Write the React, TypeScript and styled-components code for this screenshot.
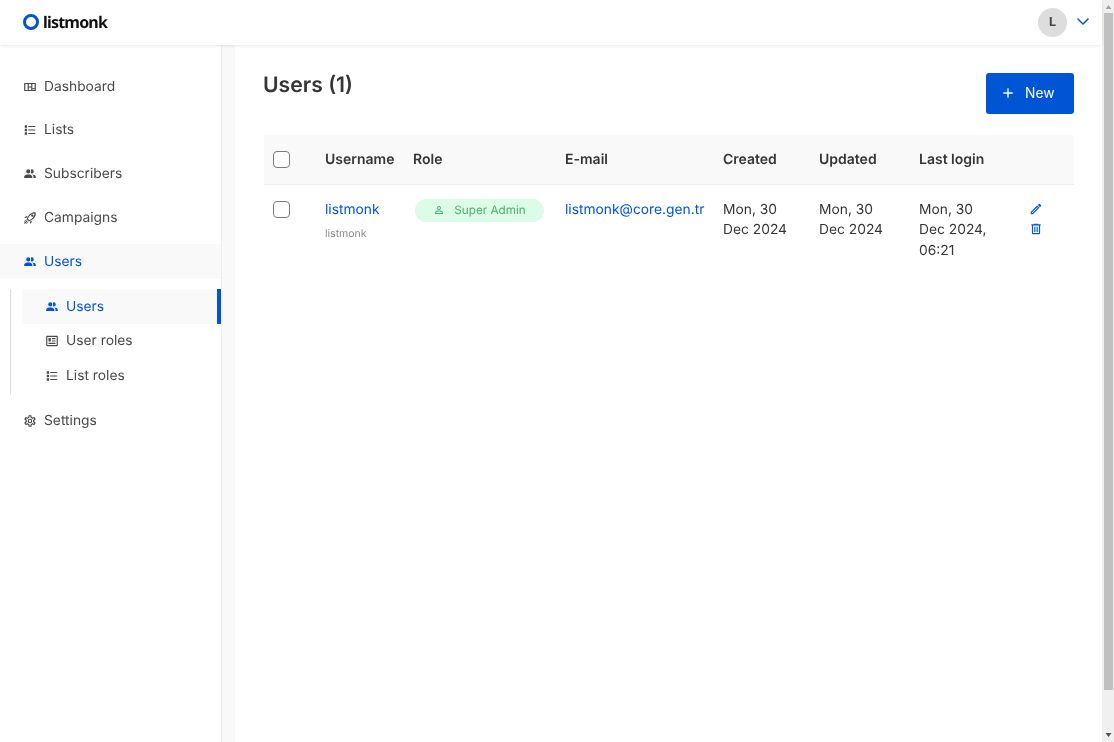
import React from "react";
import styled, { createGlobalStyle } from "styled-components";

const GlobalStyle = createGlobalStyle`
  body {
    margin: 0;
    font-family: Inter, "Liberation Sans", sans-serif;
    font-size: 13.8px;
    color: #4a4a4a;
    background: #fff;
    text-rendering: geometricPrecision;
  }
`;

const icons = {
  dashboard: "M2 5V19H22V5H2M4 7H8V17H4V7M10 7H14V11H10V7M16 7H20V14H16V7M10 13H14V17H10V13M16 16H20V17H16V16Z",
  list: "M3,4H7V8H3V4M9,5V7H21V5H9M3,10H7V14H3V10M9,11V13H21V11H9M3,16H7V20H3V16M9,17V19H21V17H9",
  people: "M16 17V19H2V17S2 13 9 13 16 17 16 17M12.5 7.5A3.5 3.5 0 1 0 9 11A3.5 3.5 0 0 0 12.5 7.5M15.94 13A5.32 5.32 0 0 1 18 17V19H22V17S22 13.37 15.94 13M15 4A3.39 3.39 0 0 0 13.07 4.59A5 5 0 0 1 13.07 10.41A3.39 3.39 0 0 0 15 11A3.5 3.5 0 0 0 15 4Z",
  rocket: "M13.13 22.19L11.5 18.36C13.07 17.78 14.54 17 15.9 16.09L13.13 22.19M5.64 12.5L1.81 10.87L7.91 8.1C7 9.46 6.22 10.93 5.64 12.5M21.61 2.39C21.61 2.39 16.66 .269 11 5.93C8.81 8.12 7.5 10.53 6.65 12.64C6.37 13.39 6.56 14.21 7.11 14.77L9.24 16.89C9.79 17.45 10.61 17.63 11.36 17.35C13.5 16.53 15.88 15.19 18.07 13C23.73 7.34 21.61 2.39 21.61 2.39M19.6 4.4C19.6 4.4 16.5 4 12.4 7.3C10.4 9 9.1 11.2 8.4 13.3L10.7 15.6C12.8 14.9 15 13.6 16.7 11.6C20 7.5 19.6 4.4 19.6 4.4M14.54 9.46C13.76 8.68 13.76 7.41 14.54 6.63S16.59 5.85 17.37 6.63C18.14 7.41 18.15 8.68 17.37 9.46C16.59 10.24 15.32 10.24 14.54 9.46M6.24 22L9.88 18.36C9.54 18.27 9.21 18.12 8.91 17.91L4.83 22H6.24M2 22H3.41L8.18 17.24L6.76 15.83L2 20.59V22M2 19.17L6.09 15.09C5.88 14.79 5.73 14.47 5.64 14.12L2 17.76V19.17Z",
  cog: "M12,8A4,4 0 0,1 16,12A4,4 0 0,1 12,16A4,4 0 0,1 8,12A4,4 0 0,1 12,8M12,10A2,2 0 0,0 10,12A2,2 0 0,0 12,14A2,2 0 0,0 14,12A2,2 0 0,0 12,10M10,22C9.75,22 9.54,21.82 9.5,21.58L9.13,18.93C8.5,18.68 7.96,18.34 7.44,17.94L4.95,18.95C4.73,19.03 4.46,18.95 4.34,18.73L2.34,15.27C2.21,15.05 2.27,14.78 2.46,14.63L4.57,12.97L4.5,12L4.57,11L2.46,9.37C2.27,9.22 2.21,8.95 2.34,8.73L4.34,5.27C4.46,5.05 4.73,4.96 4.95,5.05L7.44,6.05C7.96,5.66 8.5,5.32 9.13,5.07L9.5,2.42C9.54,2.18 9.75,2 10,2H14C14.25,2 14.46,2.18 14.5,2.42L14.87,5.07C15.5,5.32 16.04,5.66 16.56,6.05L19.05,5.05C19.27,4.96 19.54,5.05 19.66,5.27L21.66,8.73C21.79,8.95 21.73,9.22 21.54,9.37L19.43,11L19.5,12L19.43,13L21.54,14.63C21.73,14.78 21.79,15.05 21.66,15.27L19.66,18.73C19.54,18.95 19.27,19.04 19.05,18.95L16.56,17.95C16.04,18.34 15.5,18.68 14.87,18.93L14.5,21.58C14.46,21.82 14.25,22 14,22H10M11.25,4L10.88,6.61C9.68,6.86 8.62,7.5 7.85,8.39L5.44,7.35L4.69,8.65L6.8,10.2C6.4,11.37 6.4,12.64 6.8,13.8L4.68,15.36L5.43,16.66L7.86,15.62C8.63,16.5 9.68,17.14 10.87,17.38L11.24,20H12.76L13.13,17.39C14.32,17.14 15.37,16.5 16.14,15.62L18.57,16.66L19.32,15.36L17.2,13.81C17.6,12.64 17.6,11.37 17.2,10.2L19.31,8.65L18.56,7.35L16.15,8.39C15.38,7.5 14.32,6.86 13.12,6.62L12.75,4H11.25Z",
  newspaper: "M20 5L20 19L4 19L4 5H20M20 3H4C2.89 3 2 3.89 2 5V19C2 20.11 2.89 21 4 21H20C21.11 21 22 20.11 22 19V5C22 3.89 21.11 3 20 3M18 15H6V17H18V15M10 7H6V13H10V7M12 9H18V7H12V9M18 11H12V13H18V11Z",
  account: "M12,4A4,4 0 0,1 16,8A4,4 0 0,1 12,12A4,4 0 0,1 8,8A4,4 0 0,1 12,4M12,6A2,2 0 0,0 10,8A2,2 0 0,0 12,10A2,2 0 0,0 14,8A2,2 0 0,0 12,6M12,13C14.67,13 20,14.33 20,17V20H4V17C4,14.33 9.33,13 12,13M12,14.9C9.03,14.9 5.9,16.36 5.9,17V18.1H18.1V17C18.1,16.36 14.97,14.9 12,14.9Z",
  pencil: "M14.06,9L15,9.94L5.92,19H5V18.08L14.06,9M17.66,3C17.41,3 17.15,3.1 16.96,3.29L15.13,5.12L18.88,8.87L20.71,7.04C21.1,6.65 21.1,6 20.71,5.63L18.37,3.29C18.17,3.09 17.92,3 17.66,3M14.06,6.19L3,17.25V21H6.75L17.81,9.94L14.06,6.19Z",
  trash: "M9,3V4H4V6H5V19A2,2 0 0,0 7,21H17A2,2 0 0,0 19,19V6H20V4H15V3H9M7,6H17V19H7V6M9,8V17H11V8H9M13,8V17H15V8H13Z",
  chevron: "M7 9L12 14L17 9L18 10L12 16L6 10Z",
  plus: "M19,13H13V19H11V13H5V11H11V5H13V11H19V13Z",
};

type IconName = keyof typeof icons;

const Svg = styled.svg<{ $size: number }>`
  display: block;
  flex: none;
  width: ${(p) => p.$size}px;
  height: ${(p) => p.$size}px;
  fill: currentColor;
  fill-rule: evenodd;
`;

function Icon({ name, size = 14 }: { name: IconName; size?: number }) {
  return (
    <Svg $size={size} viewBox="0 0 24 24">
      <path d={icons[name]} />
    </Svg>
  );
}

const Frame = styled.div`
  display: flex;
  height: 100vh;
  overflow: hidden;
  will-change: transform;
`;

const Page = styled.div`
  flex: 1;
  min-width: 0;
  display: flex;
  flex-direction: column;
`;

const ScrollRail = styled.div`
  flex: none;
  width: 12px;
  box-sizing: border-box;
  padding: 0 1px 0 2px;
  background: #f0f0f0;
  display: flex;
  flex-direction: column;
`;

const ScrollArrow = styled.svg`
  display: block;
  flex: none;
  width: 9px;
  height: 13px;
`;

const ScrollThumb = styled.div`
  flex: none;
  height: 677px;
  background: #c0c0c0;
`;

const ScrollSpace = styled.div`
  flex: 1;
`;

const Navbar = styled.header`
  flex: none;
  position: relative;
  z-index: 2;
  height: 45px;
  display: flex;
  align-items: center;
  justify-content: space-between;
  padding: 0 7px 0 23px;
  box-shadow: 0 1px 3px rgba(0, 0, 0, 0.1);
`;

const Logo = styled.div`
  display: flex;
  align-items: center;
  gap: 4px;
  margin-top: -2px;
`;

const LogoRing = styled.span`
  width: 16px;
  height: 16px;
  box-sizing: border-box;
  border: 3.5px solid #0055d4;
  border-radius: 50%;
`;

const LogoText = styled.span`
  font-family: "Noto Sans", sans-serif;
  font-size: 16px;
  font-weight: 700;
  letter-spacing: -0.8px;
  color: #111;
  line-height: 1;
`;

const UserMenu = styled.div`
  display: flex;
  align-items: center;
  gap: 4px;
  color: #0055d4;
`;

const ChevronSlot = styled.span`
  margin-top: -3px;
`;

const Avatar = styled.div`
  width: 29px;
  height: 29px;
  border-radius: 50%;
  background: #ddd;
  color: #444;
  font-size: 12.5px;
  font-weight: 700;
  display: flex;
  align-items: center;
  justify-content: center;
`;

const Body = styled.div`
  flex: 1;
  display: flex;
  min-height: 0;
`;

const Sidebar = styled.aside`
  flex: none;
  width: 221px;
  padding-top: 24.3px;
  border-right: 1px solid #eee;
`;

const NavItem = styled.a<{ $active?: boolean }>`
  display: flex;
  align-items: center;
  gap: 7px;
  height: 35px;
  box-sizing: border-box;
  margin-bottom: 8.7px;
  padding: 0 0 0 23px;
  color: ${(p) => (p.$active ? "#0055d4" : "#4a4a4a")};
  background: ${(p) => (p.$active ? "#f9f9f9" : "transparent")};
`;

const SubMenu = styled.div`
  margin: 10px 0 9px 10px;
  padding-left: 11px;
  border-left: 1px solid #ddd;
  height: 105px;
`;

const SubItem = styled.a<{ $active?: boolean }>`
  display: flex;
  align-items: center;
  gap: 7px;
  height: 34.5px;
  box-sizing: border-box;
  padding: 1px 0 0 23px;
  color: ${(p) => (p.$active ? "#0055d4" : "#4a4a4a")};
  background: ${(p) => (p.$active ? "#f9f9f9" : "transparent")};
  border-right: 4px solid ${(p) => (p.$active ? "#0055d4" : "transparent")};
`;

const Gutter = styled.div`
  flex: none;
  width: 13px;
  background: #f9f9f9;
`;

const Main = styled.main`
  flex: 1;
  min-width: 0;
  padding: 28px 28px 0;
`;

const TitleRow = styled.div`
  display: flex;
  justify-content: space-between;
  align-items: flex-start;
  margin-bottom: 21px;
`;

const Title = styled.h1`
  margin: 0;
  font-size: 21.2px;
  line-height: 24px;
  font-weight: 600;
  color: #363636;
`;

const NewButton = styled.button`
  width: 88px;
  height: 41px;
  border: 0;
  border-radius: 3px;
  padding: 0 0 1px 14px;
  background: #0055d4;
  color: #fff;
  font: inherit;
  display: flex;
  align-items: center;
  gap: 9px;
`;

const Table = styled.table`
  width: calc(100% - 1px);
  margin-left: 1px;
  table-layout: fixed;
  border-collapse: collapse;
  color: #363636;
`;

const HeadRow = styled.tr`
  height: 49px;
  background: #f9f9f9;
  border-bottom: 1px solid #eee;
`;

const Th = styled.th<{ $width: number }>`
  width: ${(p) => p.$width}px;
  box-sizing: border-box;
  padding: 0 9px;
  text-align: left;
  font-size: 14px;
  font-weight: 600;
  white-space: nowrap;
`;

const Td = styled.td`
  padding: 15px 9px 0;
  vertical-align: top;
  line-height: 20.5px;
`;

const CheckCell = styled(Td)`
  padding-top: 16px;
`;

const Check = styled.span`
  display: block;
  width: 17px;
  height: 17px;
  box-sizing: border-box;
  border: 1px solid #7a7a7a;
  border-radius: 4px;
  background: #fff;
`;

const UserLink = styled.a`
  color: #0055d4;
  display: block;
  white-space: nowrap;
`;

const SubText = styled.div`
  margin-top: 4px;
  font-size: 10.5px;
  color: #8a8a8a;
`;

const RoleCell = styled(Td)`
  padding-top: 14px;
`;

const RoleTag = styled.span`
  width: 129px;
  height: 23px;
  margin-left: 2px;
  border-radius: 12px;
  background: #dcfce7;
  color: #4caf6e;
  font-size: 11.7px;
  display: flex;
  align-items: center;
  justify-content: center;
  gap: 9px;
`;

const DateText = styled.div`
  width: 72px;
`;

const ActionCell = styled(Td)`
  color: #0055d4;
  padding: 17px 9px 0 8px;
`;

const Actions = styled.div`
  display: flex;
  flex-direction: column;
  gap: 6px;
`;

export default function App() {
  return (
    <Frame>
      <GlobalStyle />
      <Page>
        <Navbar>
          <Logo>
            <LogoRing />
            <LogoText>listmonk</LogoText>
          </Logo>
          <UserMenu>
            <Avatar>L</Avatar>
            <ChevronSlot><Icon name="chevron" size={24} /></ChevronSlot>
          </UserMenu>
        </Navbar>
        <Body>
          <Sidebar>
            <NavItem><Icon name="dashboard" />Dashboard</NavItem>
            <NavItem><Icon name="list" />Lists</NavItem>
            <NavItem><Icon name="people" />Subscribers</NavItem>
            <NavItem><Icon name="rocket" />Campaigns</NavItem>
            <NavItem $active><Icon name="people" />Users</NavItem>
            <SubMenu>
              <SubItem $active><Icon name="people" />Users</SubItem>
              <SubItem><Icon name="newspaper" />User roles</SubItem>
              <SubItem><Icon name="list" />List roles</SubItem>
            </SubMenu>
            <NavItem><Icon name="cog" />Settings</NavItem>
          </Sidebar>
          <Gutter />
          <Main>
            <TitleRow>
              <Title>Users (1)</Title>
              <NewButton><Icon name="plus" size={16} />New</NewButton>
            </TitleRow>
            <Table>
              <thead>
                <HeadRow>
                  <Th $width={52}><Check /></Th>
                  <Th $width={88}>Username</Th>
                  <Th $width={152}>Role</Th>
                  <Th $width={158}>E-mail</Th>
                  <Th $width={96}>Created</Th>
                  <Th $width={100}>Updated</Th>
                  <Th $width={111}>Last login</Th>
                  <Th $width={53} />
                </HeadRow>
              </thead>
              <tbody>
                <tr>
                  <CheckCell><Check /></CheckCell>
                  <Td>
                    <UserLink>listmonk</UserLink>
                    <SubText>listmonk</SubText>
                  </Td>
                  <RoleCell>
                    <RoleTag><Icon name="account" size={12} />Super Admin</RoleTag>
                  </RoleCell>
                  <Td><UserLink>listmonk@core.gen.tr</UserLink></Td>
                  <Td><DateText>Mon, 30 Dec 2024</DateText></Td>
                  <Td><DateText>Mon, 30 Dec 2024</DateText></Td>
                  <Td><DateText>Mon, 30 Dec 2024, 06:21</DateText></Td>
                  <ActionCell>
                    <Actions>
                      <Icon name="pencil" />
                      <Icon name="trash" />
                    </Actions>
                  </ActionCell>
                </tr>
              </tbody>
            </Table>
          </Main>
        </Body>
      </Page>
      <ScrollRail>
        <ScrollArrow viewBox="0 0 9 13">
          <polygon points="4.5,5 7.5,9 1.5,9" fill="#a3a3a3" />
        </ScrollArrow>
        <ScrollThumb />
        <ScrollSpace />
        <ScrollArrow viewBox="0 0 9 13">
          <polygon points="1.5,4 7.5,4 4.5,8" fill="#505050" />
        </ScrollArrow>
      </ScrollRail>
    </Frame>
  );
}
